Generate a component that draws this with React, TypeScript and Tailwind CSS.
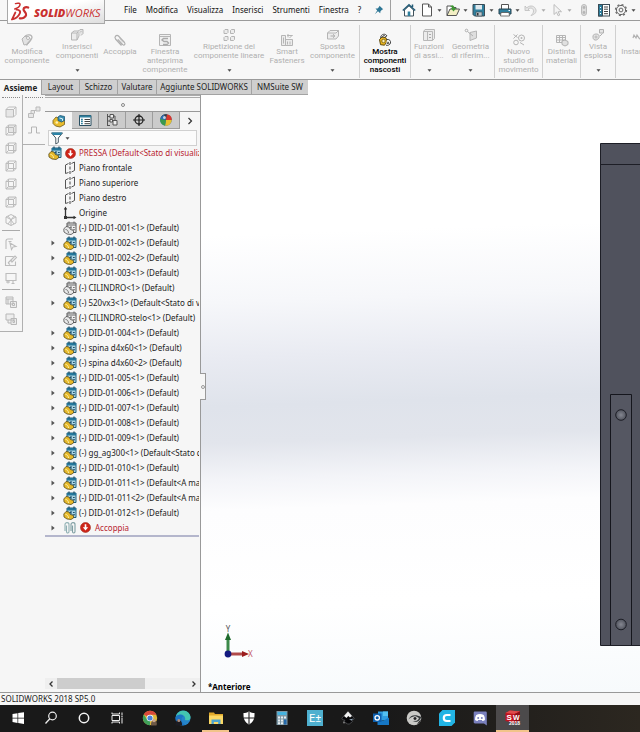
import type { ReactNode } from 'react'
import clsx from 'clsx'

interface IconProps {
  size?: number
  box?: number
  children: ReactNode
}

function Icon({ size = 14, box = 14, children }: IconProps) {
  return (
    <svg width={size} height={size} viewBox={`0 0 ${box} ${box}`} fill="none" className="shrink-0" aria-hidden="true">
      {children}
    </svg>
  )
}

function Caret({ muted = false }: { muted?: boolean }) {
  return (
    <svg width="5" height="3" viewBox="0 0 5 3" className="shrink-0" aria-hidden="true">
      <path d="M0.5 0.3h4L2.5 2.8z" fill={muted ? '#aaa' : '#4a4a4a'} />
    </svg>
  )
}

/* ---------- logo ---------- */

function Logo() {
  return (
    <div className="absolute left-[7px] top-0 z-10 flex h-6 w-[98px] items-center gap-1 border border-t-0 border-[#a9a9a9] bg-linear-to-br from-white from-40% to-[#dedede] pl-[3px]">
      <svg width="19" height="20" viewBox="0 0 19 20" fill="none" stroke="#c9302f" strokeLinecap="round" aria-hidden="true">
        <path d="M4.5 1.600C7 .9 9.400 1.200 9 2.800 8.600 4.600 6 6.200 3.800 7" strokeWidth="1.500" />
        <path d="M5.600 7.600C8.600 7.800 9.800 9.300 8.700 11.600 7.300 14.600 4 16.900 1.200 17.200L4.300 10.600" strokeWidth="1.900" />
        <path d="M17.200 5.600C15.400 4.700 12.600 5.400 12.500 7.300 12.400 9.300 15.600 10.600 15.100 13 14.600 15.500 11.400 16.700 8.800 16.300" strokeWidth="2.200" />
      </svg>
      <span className="pt-[3px] font-['Open_Sans','Noto_Sans',sans-serif] text-[11px] leading-3 text-[#c9302f] italic">
        <b className="font-extrabold">SOLID</b>WORKS
      </span>
    </div>
  )
}

/* ---------- title bar ---------- */

const MENU = ['File', 'Modifica', 'Visualizza', 'Inserisci', 'Strumenti', 'Finestra', '?']

const QUICK_TOOLS: { name: string; icon: ReactNode; muted?: boolean }[] = [
  {
    name: 'Nuovo',
    icon: <path d="M2.500 1h6l3 3v9h-9zM8.500 1v3h3" fill="#fff" stroke="#555" />,
  },
  {
    name: 'Apri',
    icon: (
      <>
        <path d="M1 12.500V3h4l1 1.500h4V6" fill="#fff" stroke="#555" />
        <path d="M1 12.500 4 6h9.500l-3 6.500z" fill="#f3efc4" stroke="#555" />
        <path d="M4 3.500c2-2 4-1.500 4.500 1.500h1.800L7.500 8.500 4.800 5h1.700C6.300 4 5.500 3.500 4 3.500z" fill="#3f9a34" />
      </>
    ),
  },
  {
    name: 'Salva',
    icon: (
      <>
        <path d="M1 1.500h11.500V13H2.500L1 11.500z" fill="#2f7f9d" stroke="#3a4b55" />
        <path d="M3.500 2h6.500v4.500H3.500z" fill="#dfe9ee" />
        <path d="M4 9h6v4H4z" fill="#bcc5cb" stroke="#3a4b55" strokeWidth=".6" />
        <path d="M5 10h1.500v2.500H5z" fill="#333" />
      </>
    ),
  },
  {
    name: 'Stampa',
    icon: (
      <>
        <path d="M3.500 6V1.500h7V6" fill="#fff" stroke="#555" />
        <path d="M1 6h12v5H1z" fill="#2f7f9d" stroke="#2b4451" />
        <path d="M3 9.500h8l.5 3.500h-9z" fill="#fff" stroke="#555" strokeWidth=".8" />
        <path d="M10.500 7.500h1.500" stroke="#fff" />
      </>
    ),
  },
  {
    name: 'Annulla',
    muted: true,
    icon: <path d="M1 3v4.500h4.500L4 6c3-2 5.500-.5 5.500 2 0 2-1 3-2.500 4.500C11 11.500 12.500 9 12 7 11 3 6.500 1.500 2.800 4.800z" fill="#e6e6e6" stroke="#c2c2c2" strokeWidth=".9" />,
  },
  {
    name: 'Seleziona',
    muted: true,
    icon: <path d="M4 1.500v10l2.500-2.300 1.700 3.600 1.500-.7L8.200 8.700h3.300z" fill="#f4f4f4" stroke="#bdbdbd" />,
  },
]

function TitleBar() {
  return (
    <header className="relative flex h-[21px] items-center border-b border-[#9a9a9a] bg-[#f7f7f7] pl-[124px]">
      <Logo />
      <nav className="flex items-center gap-[9px]">
        {MENU.map(item => (
          <button key={item} className="leading-3 text-[#111]">{item}</button>
        ))}
      </nav>
      <div className="ml-auto flex items-center">
        <button aria-label="Blocca menu" className="pr-1.5">
          <Icon size={10} box={10}>
            <path d="M5.500.8 9.200 4.300 8 4.700 6.500 6.300 6.200 8.300 4 6.300.8 9.200 3.200 5.500 1.500 3.600l2-.2L5 2z" fill="#2e7796" />
          </Icon>
        </button>
        <div className="flex h-5 items-center border-l border-[#a0a0a0] pl-2">
          <button aria-label="Home" className="flex w-[19px] justify-center">
            <Icon>
              <path d="M2.500 7v6h9V7L7 2.800z" fill="#fff" stroke="#41525c" />
              <path d="M5.700 13V8.500h2.600V13z" fill="#2f7f9d" />
              <path d="M.8 7.500 7 1.700l6.200 5.800M10.500 1.500V4" stroke="#245c77" strokeWidth="1.500" />
            </Icon>
          </button>
          {QUICK_TOOLS.map(tool => (
            <button key={tool.name} aria-label={tool.name} className="flex w-[26px] items-center gap-[3px] pl-[2px]">
              <Icon>{tool.icon}</Icon>
              <Caret muted={tool.muted} />
            </button>
          ))}
          <button aria-label="Ricostruisci" className="flex w-5 justify-center">
            <Icon>
              <rect x="4.500" y="1.500" width="5" height="11" rx="2.500" fill="#ddd" stroke="#bbb" />
              <circle cx="7" cy="4.500" r="1.400" fill="#b5b5b5" />
              <circle cx="7" cy="9.500" r="1.400" fill="#b5b5b5" />
            </Icon>
          </button>
          <button aria-label="Proprietà" className="flex w-5 justify-center">
            <Icon>
              <rect x="1.500" y="1.500" width="11" height="11.500" fill="#fff" stroke="#3a4b55" />
              <path d="M1.500 1.500h4v11.500h-4z" fill="#2f7f9d" stroke="#3a4b55" />
              <path d="M7 4h4M7 6.200h4M7 8.500h4M7 10.700h4" stroke="#444" />
              <path d="M3 4.500h1M3 7.500h1M3 10.500h1" stroke="#fff" />
            </Icon>
          </button>
          <button aria-label="Opzioni" className="flex items-center gap-[3px] pr-1">
            <Icon>
              <circle cx="7" cy="7" r="4.600" fill="#f4f4f4" stroke="#666" />
              <circle cx="7" cy="7" r="5.500" stroke="#666" strokeWidth="1.300" strokeDasharray="2 2.300" />
              <circle cx="7" cy="7" r="1.900" stroke="#666" />
            </Icon>
            <Caret />
          </button>
        </div>
      </div>
    </header>
  )
}

/* ---------- ribbon ---------- */

interface Command {
  lines: string[]
  width: string
  icon: ReactNode
  active?: boolean
  menu?: boolean
  divider?: boolean
}

const COMMANDS: Command[] = [
  {
    lines: ['Modifica', 'componente'],
    width: 'w-[54px]',
    icon: (
      <>
        <path d="M2 6 5 3l4 1 2 3-3 4-4 1z" fill="#e2e2e2" stroke="#b5b5b5" />
        <path d="M5 3.500c2-2.500 7-2 7 1S8 8 6.500 12.500" stroke="#b5b5b5" strokeWidth="1.300" />
        <circle cx="8" cy="5" r="1.500" fill="#fff" stroke="#b5b5b5" />
      </>
    ),
  },
  {
    lines: ['Inserisci', 'componenti'],
    width: 'w-[46px]',
    menu: true,
    icon: (
      <>
        <path d="M1.500 5 4 3h5v5l-2 4H1.500zM1.500 5H7l2-2M7 5v7" fill="#ececec" stroke="#b5b5b5" />
        <path d="M8 3.500 10 1.500h3v4L11 7.500M10 4.500l1.500-1.500" fill="#e4e4e4" stroke="#b5b5b5" />
      </>
    ),
  },
  {
    lines: ['Accoppia'],
    width: 'w-[40px]',
    icon: (
      <>
        <path d="M8.500 12.500 2.500 6C1 4 3.500 1 5.500 3l6 6.500c1.500 2-.8 3.500-2 2L4.800 6.300" stroke="#b0b0b0" strokeWidth="1.200" />
        <path d="m6.500 5.500 3.500 4" stroke="#c8c8c8" />
      </>
    ),
  },
  {
    lines: ['Finestra', 'anteprima', 'componente'],
    width: 'w-[50px]',
    icon: (
      <>
        <path d="M1.500 1.500h11v11h-11zM1.500 3.500h11" fill="#f0f0f0" stroke="#b5b5b5" />
        <path d="M10 5.500H5.500L4 7l2 1.500h3L10.500 10 9 11.500H5" stroke="#aaa" strokeWidth="1.400" />
      </>
    ),
  },
  {
    lines: ['Ripetizione del', 'componente lineare'],
    width: 'w-[78px]',
    menu: true,
    icon: (
      <path d="M2 2.500 3 1.500h3v3L5 5.500H2zM8.500 2.500l1-1h3v3l-1 1h-3zM2 9.500l1-1h3v3l-1 1H2zM8.500 9.500l1-1h3v3l-1 1h-3z" fill="#ececec" stroke="#b5b5b5" />
    ),
  },
  {
    lines: ['Smart', 'Fasteners'],
    width: 'w-[38px]',
    icon: (
      <>
        <path d="M1.500 2.500h4v10h-4zM5.500 6.500h7v6h-7z" fill="#ececec" stroke="#b5b5b5" />
        <path d="M7 2.500h5.500M8 1v3.500M9.500 5 12.500 2M3.500 4.500v6M7.500 8.500v3M10 8.500v3" stroke="#b5b5b5" />
      </>
    ),
  },
  {
    lines: ['Sposta', 'componente'],
    width: 'w-[53px]',
    menu: true,
    icon: (
      <>
        <path d="M1.500 5 4 2.500h8.500V8L10 11H1.500zM1.500 5H10l2.500-2.500" fill="#ececec" stroke="#b5b5b5" />
        <path d="M4.500 8h4M7 6.300 8.800 8 7 9.700" stroke="#aaa" />
      </>
    ),
  },
  {
    lines: ['Mostra', 'componenti', 'nascosti'],
    width: 'w-[51px]',
    active: true,
    divider: true,
    icon: (
      <>
        <path d="M1.500 6.500 4 4l4 .8 1 3.700-2.500 3.700-4-.5z" fill="#e9b41d" stroke="#5e4a12" />
        <path d="M2.500 4.500C3 1 7.500 0 9 3l-1.500.5C6.500 2 5 2.300 4.500 4zM9 6.500c2.500-.5 4 1.500 3.500 3.500s-3 2.800-4.500 2.200" fill="#f4f4f4" stroke="#333" strokeWidth=".9" />
        <circle cx="5.500" cy="8" r="1.700" fill="#fff3b8" stroke="#5e4a12" strokeWidth=".7" />
        <path d="m8.500 11 1.500-2.500 1.500 2z" fill="#333" />
      </>
    ),
  },
  {
    lines: ['Funzioni', 'di assi...'],
    width: 'w-[37px]',
    menu: true,
    divider: true,
    icon: (
      <>
        <path d="M1.500 3.500 3 1.500h9.500v9l-2 2h-9zM1.500 3.500h9v9M5.500 3.500v9" fill="#ececec" stroke="#b8b8b8" />
        <path d="M7 6.500h2M7 9.500h2" stroke="#aaa" />
      </>
    ),
  },
  {
    lines: ['Geometria', 'di riferim...'],
    width: 'w-[47px]',
    menu: true,
    icon: (
      <>
        <path d="m6 4.500 6.500-1.500v7L6 12.500z" fill="#dedede" stroke="#b5b5b5" />
        <circle cx="2.500" cy="2.500" r="1.300" stroke="#b0b0b0" />
        <path d="M3.500 3.500 9 8" stroke="#b0b0b0" />
      </>
    ),
  },
  {
    lines: ['Nuovo', 'studio di', 'movimento'],
    width: 'w-[48px]',
    divider: true,
    icon: (
      <>
        <circle cx="9.500" cy="5" r="3" stroke="#b5b5b5" />
        <circle cx="9.500" cy="5" r="1" fill="#b5b5b5" />
        <circle cx="4" cy="9.500" r="2.300" stroke="#b5b5b5" />
        <path d="m1.500 1.500 4 3M5.500 1.500l-4 4M8 9.500l4 2.500" stroke="#b5b5b5" />
      </>
    ),
  },
  {
    lines: ['Distinta', 'materiali'],
    width: 'w-[38px]',
    divider: true,
    icon: (
      <>
        <path d="M1.500 2.500h9v7h-9zM1.500 4.500h9M1.500 7h9M4.500 2.500v7M7.500 2.500v7" stroke="#b5b5b5" />
        <path d="m7 8 3-1 3 1.500v3L10 13l-3-1.500z" fill="#e0e0e0" stroke="#b0b0b0" />
      </>
    ),
  },
  {
    lines: ['Vista', 'esplosa'],
    width: 'w-[35px]',
    menu: true,
    divider: true,
    icon: (
      <>
        <path d="M2 8c0-2 5-3 6-.5s-2 5-4 4.500S2 10 2 8z" fill="#e4e4e4" stroke="#b0b0b0" />
        <circle cx="5" cy="9" r="1" fill="#fff" stroke="#b0b0b0" />
        <path d="M8.500 1.500h4v3.500h-4zM9 8l2.500-2.500" fill="#e4e4e4" stroke="#b0b0b0" />
      </>
    ),
  },
  {
    lines: ['Instant3D'],
    width: 'w-[46px]',
    divider: true,
    icon: <path d="m1 5 1-3 2 3 1-3 2 3 5 5M9 11l4 2-1.500-4" stroke="#b0b0b0" strokeWidth="1.200" />,
  },
]

function Ribbon() {
  return (
    <div className="flex h-[59px] overflow-hidden border-b border-[#9a9a9a] bg-[#f7f7f7] pt-1 pb-px font-[Roboto,'Noto_Sans',sans-serif]">
      {COMMANDS.map(cmd => (
        <button
          key={cmd.lines.join(' ')}
          className={clsx(
            'flex shrink-0 flex-col items-center whitespace-nowrap leading-[9px]',
            cmd.width,
            cmd.divider && 'border-l border-[#d0d0d0]',
            cmd.active ? 'font-medium text-black' : 'text-[#b0b0b0]',
            cmd.menu ? 'pt-[3px]' : 'pt-2',
          )}
        >
          <Icon>{cmd.icon}</Icon>
          {cmd.lines.map(line => (
            <span key={line}>{line}</span>
          ))}
          {cmd.menu && (
            <span className="mt-auto pb-1.5">
              <Caret />
            </span>
          )}
        </button>
      ))}
    </div>
  )
}

const TABS = [
  { name: 'Assieme', width: 'w-[41px]' },
  { name: 'Layout', width: 'w-[38px]' },
  { name: 'Schizzo', width: 'w-[38px]' },
  { name: 'Valutare', width: 'w-[39px]' },
  { name: 'Aggiunte SOLIDWORKS', width: 'w-[95px]' },
  { name: 'NMSuite SW', width: 'w-[57px]' },
]

function RibbonTabs() {
  return (
    <div role="tablist" className="flex h-[15px] bg-white">
      {TABS.map((tab, i) => (
        <button
          key={tab.name}
          role="tab"
          aria-selected={i === 0}
          className={clsx(
            'flex shrink-0 items-center justify-center whitespace-nowrap leading-3 text-[#222]',
            tab.width,
            i === 0 ? 'bg-[#f7f7f7] font-bold' : 'border-b border-l border-[#a3a3a3] bg-[#cfcfcf]',
          )}
        >
          {tab.name}
        </button>
      ))}
    </div>
  )
}

/* ---------- left tool strips ---------- */

const CUBE = 'M2 4.500h7.500V12H2zM4.500 2H12v7.500M2 4.500 4.500 2M9.500 4.500 12 2M9.500 12 12 9.500'
const CUBE_BACK = 'M4.500 2v7.500H12M2 12l2.500-2.500'

const VIEW_CUBES = [
  { name: 'Frontale', path: CUBE, face: 'M2 4.500h7.500V12H2z' },
  { name: 'Posteriore', path: CUBE + CUBE_BACK, face: 'M4.500 2H12v7.500H4.500z' },
  { name: 'Sinistra', path: CUBE + CUBE_BACK, face: 'M9.500 4.500 12 2v7.500L9.500 12z' },
  { name: 'Destra', path: CUBE + CUBE_BACK, face: 'M2 4.500 4.500 2v7.500L2 12z' },
  { name: 'Superiore', path: CUBE + CUBE_BACK, face: 'M2 12l2.500-2.500H12L9.500 12z' },
  { name: 'Inferiore', path: CUBE + CUBE_BACK, face: 'M2 4.500 4.500 2H12L9.500 4.500z' },
  { name: 'Isometrica', path: 'M7 1.500 12 4v6l-5 2.500L2 10V4zM2 4l5 2.500L12 4M7 6.500v6M4 3l6 8M10 3 4 11', face: '' },
]

const SKETCH_TOOLS = [
  { name: 'Schizzo', path: 'M2 12V4c0-1.500 1-2 2-2h5M4.500 4.500h3M6 6l6 3.500-3 .5-1.500 2.500z' },
  { name: 'Modifica schizzo', path: 'M1.500 2.500h8M1.500 2.500v9h10v-4M4 9l3-3M7 6l4-4 1.500 1.500L8 8zM4 9l2 1.500' },
  { name: 'Blocco', path: 'M2 2.500h10v7H2zM4 9.500v3M2 11h4M9 9.500v3M7.500 12.500h3' },
]

const COPY_TOOLS = [
  { name: 'Copia', path: 'M2 2h7v7H2zM2 4h7M4 4v5M6.500 6.500h6v6h-6zM8.500 8.500h2v2h-2z' },
  { name: 'Incolla', path: 'M2 2h8v6H2zM4 8v3h3M7 6.500h5.500v6H7zM9 8.500h1.500v2H9z' },
]

function ToolStrips() {
  return (
    <div className="flex shrink-0 items-start bg-[#f6f6f6]">
      <div className="flex h-[237px] w-[23px] flex-col items-center border-r border-b border-[#b0b0b0] pt-[2px]">
        <div className="mb-[5px] w-[18px] border-t border-dotted border-[#888]" />
        {VIEW_CUBES.map(cube => (
          <button key={cube.name} aria-label={cube.name} className="flex h-[18px] items-center">
            <Icon>
              {cube.face && <path d={cube.face} fill="#e6e6e6" />}
              <path d={cube.path} stroke="#bcbcbc" />
            </Icon>
          </button>
        ))}
        <div className="mt-px mb-1 w-[18px] border-t border-[#aaa]" />
        {SKETCH_TOOLS.map(tool => (
          <button key={tool.name} aria-label={tool.name} className="flex h-[17px] items-center">
            <Icon><path d={tool.path} stroke="#bcbcbc" strokeWidth="1.100" /></Icon>
          </button>
        ))}
        <div className="my-[3px] w-[18px] border-t border-[#aaa]" />
        {COPY_TOOLS.map(tool => (
          <button key={tool.name} aria-label={tool.name} className="flex h-[17px] items-center">
            <Icon><path d={tool.path} fill="#ededed" stroke="#b8b8b8" /></Icon>
          </button>
        ))}
      </div>
      <div className="flex h-[50px] w-[22px] flex-col items-center border-b border-[#b0b0b0] pt-[2px]">
        <div className="mb-[5px] w-[18px] border-t border-dotted border-[#888]" />
        <button aria-label="Percorso" className="flex h-[18px] items-center">
          <Icon>
            <path d="M1.500 8.500h5v4h-5zM4 8.500V5.500h3.500v3M7 5.500h2M9 2h4v4H9z" fill="#e6e6e6" stroke="#bababa" />
          </Icon>
        </button>
        <button aria-label="Profilo" className="flex h-[18px] items-center">
          <Icon><path d="M1 10h3.500V4h5v6H13" stroke="#b5b5b5" /></Icon>
        </button>
      </div>
    </div>
  )
}

/* ---------- feature tree ---------- */

function AssemblyIcon() {
  return (
    <Icon>
      <path d="M4 2h9v9.500H4z" fill="#a9d3e2" stroke="#1f5f7c" />
      <path d="M4 2h9v2.500H4z" fill="#24779b" />
      <path d="M6 .500v2M11 .500v2" stroke="#1d4f69" strokeWidth="1.300" />
      <path d="M.8 8 3 5.500 6 6l1.500 2.500 3 1v2.500l-2.500 1.500-4-.5L1 11z" fill="#e6b92a" stroke="#5c4f1e" strokeWidth=".8" />
      <path d="M6.500 6.500h2M10 6.500h1.700M9.500 8.700h2.500M8 5v3.500" stroke="#1d4f69" strokeWidth="1.100" />
      <path d="M2.500 8.500c1.800 0 2.800 1.300 3 3.500" stroke="#fff0a8" />
    </Icon>
  )
}

function HiddenPartIcon() {
  return (
    <Icon>
      <path d="M4 2h9v9.500H4z" fill="#eee" stroke="#5a5a5a" />
      <path d="M4 4h9M6 .500v2M11 .500v2" stroke="#666" />
      <path d="M.8 8 3 5.500 6 6l1.500 2.500 3 1v2.500l-2.500 1.500-4-.5L1 11z" fill="#e9e9e9" stroke="#4d4d4d" strokeWidth=".8" />
      <path d="M6.500 6.500h2M10 6.500h1.700M9.500 8.700h2.500M8 5v3.500M2.500 8.500c1.800 0 2.800 1.300 3 3.500" stroke="#777" />
    </Icon>
  )
}

function PlaneIcon() {
  return (
    <Icon>
      <path d="M5.500 2.500 2.500 4v8.500l3-1M8.500 2.500l3-1.500v8.500l-3 1.500" stroke="#555" />
      <path d="M7 1v12.500" stroke="#444" strokeDasharray="3 1.500" />
    </Icon>
  )
}

function OriginIcon() {
  return (
    <Icon>
      <path d="M2.500 2v9.500H12" stroke="#333" strokeWidth="1.300" />
      <path d="M2.500 .5 4.200 3.500H.8zM13.500 11.500l-3-1.700v3.400zM1 10h3v3H1z" fill="#333" />
    </Icon>
  )
}

function MatesIcon() {
  return (
    <Icon>
      <path d="M2 10V3.500c0-2.500 4-2.500 4 0v7c0 2-2.500 2-2.500 0V4.500" stroke="#8fb0b3" strokeWidth="1.100" />
      <path d="M8 10V3.500c0-2.500 4-2.500 4 0v7c0 2-2.500 2-2.500 0V4.500" stroke="#7e9ea2" strokeWidth="1.100" />
    </Icon>
  )
}

function ErrorIcon() {
  return (
    <Icon size={11} box={11}>
      <circle cx="5.500" cy="5.500" r="5" fill="#cf2418" stroke="#9d2b1c" strokeWidth=".6" />
      <path d="M4.700 2.300h1.600v3h1.900L5.500 8.600 2.800 5.300h1.900z" fill="#fff" />
    </Icon>
  )
}

type Kind = 'plane' | 'origin' | 'hidden' | 'assembly'

const NODES: { label: string; kind: Kind }[] = [
  { label: 'Piano frontale', kind: 'plane' },
  { label: 'Piano superiore', kind: 'plane' },
  { label: 'Piano destro', kind: 'plane' },
  { label: 'Origine', kind: 'origin' },
  { label: '(-) DID-01-001<1> (Default)', kind: 'hidden' },
  { label: '(-) DID-01-002<1> (Default)', kind: 'assembly' },
  { label: '(-) DID-01-002<2> (Default)', kind: 'assembly' },
  { label: '(-) DID-01-003<1> (Default)', kind: 'assembly' },
  { label: '(-) CILINDRO<1> (Default)', kind: 'hidden' },
  { label: '(-) 520vx3<1> (Default<Stato di v', kind: 'assembly' },
  { label: '(-) CILINDRO-stelo<1> (Default)', kind: 'hidden' },
  { label: '(-) DID-01-004<1> (Default)', kind: 'assembly' },
  { label: '(-) spina d4x60<1> (Default)', kind: 'assembly' },
  { label: '(-) spina d4x60<2> (Default)', kind: 'assembly' },
  { label: '(-) DID-01-005<1> (Default)', kind: 'assembly' },
  { label: '(-) DID-01-006<1> (Default)', kind: 'assembly' },
  { label: '(-) DID-01-007<1> (Default)', kind: 'assembly' },
  { label: '(-) DID-01-008<1> (Default)', kind: 'assembly' },
  { label: '(-) DID-01-009<1> (Default)', kind: 'assembly' },
  { label: '(-) gg_ag300<1> (Default<Stato d', kind: 'assembly' },
  { label: '(-) DID-01-010<1> (Default)', kind: 'assembly' },
  { label: '(-) DID-01-011<1> (Default<A ma', kind: 'assembly' },
  { label: '(-) DID-01-011<2> (Default<A ma', kind: 'assembly' },
  { label: '(-) DID-01-012<1> (Default)', kind: 'assembly' },
]

const NODE_ICONS: Record<Kind, ReactNode> = {
  plane: <PlaneIcon />,
  origin: <OriginIcon />,
  hidden: <HiddenPartIcon />,
  assembly: <AssemblyIcon />,
}

function Expander() {
  return (
    <svg width="4" height="6" viewBox="0 0 4 6" aria-hidden="true">
      <path d="M.5.500 3.700 3 .5 5.500z" fill="#555" />
    </svg>
  )
}

const PANEL_TABS: { name: string; icon: ReactNode }[] = [
  {
    name: 'Albero di disegno',
    icon: (
      <>
        <path d="M1 6.500 4 3l4 1.500 1 2 3.500-.5v4.500L8 13l-4.500-1L1 9.500z" fill="#e8bb2c" stroke="#6d5a1c" strokeWidth=".8" />
        <path d="M6 3 8 1.500l4.500 1v4L9.500 8 6 6.500z" fill="#3a8fb0" stroke="#1d5876" strokeWidth=".8" />
        <path d="m7.500 4 3 .8v2" stroke="#e5f3f8" />
        <circle cx="4.800" cy="8.500" r="1.300" fill="#fff1b0" />
      </>
    ),
  },
  {
    name: 'PropertyManager',
    icon: (
      <>
        <path d="M1.500 2.500h11.500v10H1.500z" fill="#fff" stroke="#2b4f61" />
        <path d="M1.500 2.500h11.500v2H1.500z" fill="#2f7f9d" />
        <path d="M6.500 6.500H12M6.500 8.500H12M6.500 10.700H12" stroke="#444" />
        <path d="M3 6.500h1.800M3 8.500h1.800M3 10.700h1.800" stroke="#2f7f9d" strokeWidth="1.300" />
      </>
    ),
  },
  {
    name: 'ConfigurationManager',
    icon: (
      <>
        <path d="M2.500 1v12M2.500 3.500h2.500M2.500 8h2.500M2.500 12.500H5" stroke="#555" />
        <path d="M5 1.500h3.500V5H5zM5 6.500h2.500V9H5zM8 7.500h4v4.500H8zM10 3v4.500M8.500 3H10" fill="#eee" stroke="#555" />
      </>
    ),
  },
  {
    name: 'DimXpertManager',
    icon: (
      <>
        <circle cx="7" cy="7" r="4" stroke="#222" strokeWidth="1.300" />
        <path d="M7 1v12M1 7h12" stroke="#222" strokeWidth="1.200" />
      </>
    ),
  },
  {
    name: 'DisplayManager',
    icon: (
      <>
        <circle cx="7" cy="7" r="5.800" fill="#2d6fb3" />
        <path d="M7 7 1.500 5A5.800 5.800 0 0 1 8 1.300z" fill="#3a3a3a" />
        <path d="M7 7 8 1.300A5.800 5.800 0 0 1 12.800 7z" fill="#d9372c" />
        <path d="M7 7h5.800A5.800 5.800 0 0 1 6 12.700z" fill="#e9c02f" />
        <path d="M7 7 6 12.700A5.800 5.800 0 0 1 1.500 5z" fill="#3c9a4c" />
        <path d="M7 7 1.300 6A5.800 5.800 0 0 1 5 1.600z" fill="#2d6fb3" />
        <circle cx="5.500" cy="4.500" r="1.500" fill="#fff" opacity=".7" />
      </>
    ),
  },
]

function FeaturePanel() {
  return (
    <aside className="relative flex w-[156px] shrink-0 flex-col border-r border-[#999] bg-[#f6f6f6]">
      <div className="h-[3px] border-y border-[#aaa]" />
      <div className="flex h-[13px] items-center justify-center">
        <span className="size-1 rounded-full border border-[#888]" />
      </div>
      <div role="tablist" className="flex h-[18px] border-t border-[#999]">
        {PANEL_TABS.map((tab, i) => (
          <button
            key={tab.name}
            role="tab"
            aria-label={tab.name}
            aria-selected={i === 0}
            className={clsx(
              'flex w-[27px] items-center justify-center',
              i > 0 && 'border-r border-b border-[#9d9d9d] bg-[#cbcbcb]',
            )}
          >
            <Icon>{tab.icon}</Icon>
          </button>
        ))}
        <button aria-label="Altre schede" className="flex flex-1 items-center justify-center">
          <Icon size={8} box={8}><path d="m2.500 1 3 3-3 3" stroke="#333" strokeWidth="1.200" /></Icon>
        </button>
      </div>
      <label className="mx-[3px] mt-px flex h-4 items-center gap-px border border-[#d0d0d0] bg-[#fbfbfb] pl-px">
        <Icon>
          <path d="M1.500 2h11L8.300 7v4.500L5.800 13V7z" fill="#fff" stroke="#4a5a63" />
          <path d="M1.500 1.500h11L10.800 4H3.200z" fill="#2c83a6" />
        </Icon>
        <Caret />
        <input type="text" aria-label="Filtro" className="min-w-0 flex-1 bg-transparent outline-none" />
      </label>

      <div className="mr-px overflow-hidden border-b-2 border-[#b4b6cc] leading-[14px] whitespace-nowrap text-[#222]">
        <div className="flex h-[14px] items-center gap-[3px] pl-[3px] text-[#b8232f]">
          <AssemblyIcon />
          <ErrorIcon />
          <span>PRESSA (Default&lt;Stato di visualiz</span>
        </div>
        <ul>
          {NODES.map(node => (
            <li key={node.label} className="flex h-[15px] items-center pl-1.5">
              <span className="w-3 shrink-0">{node.kind === 'assembly' && <Expander />}</span>
              {NODE_ICONS[node.kind]}
              <span className="ml-[2px]">{node.label}</span>
            </li>
          ))}
          <li className="flex h-[15px] items-center pl-1.5 text-[#b8232f]">
            <span className="w-3 shrink-0"><Expander /></span>
            <MatesIcon />
            <span className="mr-1 ml-[3px]"><ErrorIcon /></span>
            Accoppia
          </li>
        </ul>
      </div>

      <div className="mt-auto mb-[3px] flex h-[11px] items-center bg-[#efefef]">
        <button aria-label="Scorri a sinistra" className="flex w-3 justify-center">
          <Icon size={8} box={8}><path d="M5.500 1.500 3 4l2.500 2.500" stroke="#333" strokeWidth="1.300" /></Icon>
        </button>
        <div className="h-full w-[88px] bg-[#cdcdcd]" />
        <button aria-label="Scorri a destra" className="ml-auto flex w-3 justify-center">
          <Icon size={8} box={8}><path d="M2.500 1.500 5 4 2.500 6.500" stroke="#333" strokeWidth="1.300" /></Icon>
        </button>
      </div>

      <button aria-label="Comprimi pannello" className="absolute top-[278px] -right-1.5 z-10 flex h-[27px] w-1.5 items-center justify-center border border-l-0 border-[#999] bg-[#f6f6f6]">
        <span className="size-1 shrink-0 rounded-full border border-[#999]" />
      </button>
    </aside>
  )
}

/* ---------- graphics area ---------- */

function Model() {
  return (
    <svg width="40" height="503" viewBox="0 0 40 503" className="absolute top-12 right-0" role="img" aria-label="Pressa">
      <defs>
        <radialGradient id="screw">
          <stop offset="0" stopColor="#858791" />
          <stop offset="1" stopColor="#50535d" />
        </radialGradient>
      </defs>
      <path d="M.5.500H41V502.500H.5z" fill="#50525d" stroke="#1d1e26" />
      <path d="M0 21.500h40" stroke="#1d1e26" />
      <path d="M10.500 502V251.500h21V502" fill="#555762" stroke="#15161d" />
      <circle cx="21" cy="272" r="5.300" fill="url(#screw)" stroke="#1d1e26" />
      <circle cx="21" cy="481.500" r="5.300" fill="url(#screw)" stroke="#1d1e26" />
    </svg>
  )
}

function Viewport() {
  return (
    <main className="relative flex min-w-0 flex-1 flex-col justify-end overflow-hidden bg-linear-[178deg,#ffffff_0%,#ffffff_23%,#f6f7fa_34%,#e9ebf2_43%,#dfe3eb_51%,#e2e5ec_57%,#f3f4f8_63%,#fdfdfe_68%,#ffffff_84%,#f7fafc_100%]">
      <Model />
      <div className="flex flex-col items-start pl-[7px]">
        <svg width="50" height="42" viewBox="0 0 50 42" className="ml-3" role="img" aria-label="Assi">
          <path d="M8 33V17" stroke="#3c8a4a" strokeWidth="3" />
          <path d="M8 11.500 11 19H5z" fill="#1f6b2d" />
          <path d="M8 33h15" stroke="#b04a4a" strokeWidth="3" />
          <path d="M29 33l-7-3v6z" fill="#9c1d1d" />
          <circle cx="8" cy="33" r="3.400" fill="#141a80" />
          <text x="8" y="11" textAnchor="middle" fontSize="8" fill="#555">Y</text>
          <text x="28" y="36" fontSize="8" fill="#c55a6a">X</text>
        </svg>
        <span className="mt-[19px] leading-[10px] font-bold text-black">*Anteriore</span>
      </div>
    </main>
  )
}

/* ---------- taskbar ---------- */

const TASKS: { name: string; icon: ReactNode; state?: 'open' | 'focused' }[] = [
  {
    name: 'Start',
    icon: <path d="M2.500 4 7.500 3.200v4.500h-5zM8.200 3.100l5.800-.9v5.500H8.200zM2.500 8.400h5v4.500l-5-.8zM8.200 8.400H14V14l-5.800-.9z" fill="#fff" />,
  },
  {
    name: 'Cerca',
    icon: (
      <>
        <circle cx="9.500" cy="6" r="3.800" stroke="#eee" strokeWidth="1.200" />
        <path d="M6.800 8.800 2.500 13.500" stroke="#eee" strokeWidth="1.300" />
      </>
    ),
  },
  { name: 'Cortana', icon: <circle cx="8" cy="8" r="4.700" stroke="#f4f4f4" strokeWidth="1.500" /> },
  {
    name: 'Visualizzazione attività',
    icon: <path d="M3 5.500h7.500v5H3zM3 2.500v1.500h7.500V2.500M3 13.500V12h7.500v1.500M13 2.500v3M13 8v5.500M12.200 6.800h1.600" stroke="#eee" />,
  },
  {
    name: 'Chrome',
    icon: (
      <>
        <circle cx="8" cy="8" r="7.200" fill="#ddb93a" />
        <path d="M8 8 1.800 4.400A7.200 7.200 0 0 1 14.500 4.800H8z" fill="#d9483b" />
        <path d="M8 8 8 15.200A7.200 7.200 0 0 1 1.800 4.400L5 9.500z" fill="#3fa05a" />
        <circle cx="8" cy="8" r="3.300" fill="#fff" />
        <circle cx="8" cy="8" r="2.600" fill="#4a83d8" />
        <path d="M9 15.500c-.5-3 .8-5 3-5s3.500 2.500 2.500 5z" fill="#6e5947" />
        <circle cx="12" cy="10.500" r="1.700" fill="#c9a68c" />
      </>
    ),
  },
  {
    name: 'Edge',
    icon: (
      <>
        <circle cx="8" cy="8" r="7.500" fill="#2584c9" />
        <path d="M1 6.500C2.500-1 14-1.500 15.500 6.500c.5 3.500-3 4.500-5.500 3.500 1-3.500-2-6-5-5.500-2 .3-3.500 1.200-4 2z" fill="#43c5b0" />
        <path d="M.6 7C3 4 7 4 8.500 6.500 6 7 5.500 12 10 14.800 3 17 0 12 .6 7z" fill="#1b74c4" />
        <path d="M.5 15.500c-.3-3 .8-5.500 3-5.500s3.800 2 3.500 5.500z" fill="#1c1c22" />
        <circle cx="3.800" cy="10.500" r="1.500" fill="#a98b7c" />
      </>
    ),
  },
  {
    name: 'Esplora file',
    state: 'open',
    icon: (
      <>
        <path d="M1 2.500h5l1 1.500h8V14H1z" fill="#e0a92b" />
        <path d="M1 5.500h14V14H1z" fill="#fbd865" />
        <path d="M3.500 14V9.500h9V14h-2.300v-2H5.800v2z" fill="#4da3cf" />
      </>
    ),
  },
  {
    name: 'Sicurezza',
    icon: (
      <>
        <path d="M8 1.500c2 1.200 3.800 1.500 5.500 1.500C13.700 9 12.500 12 8 14.500 3.500 12 2.300 9 2.500 3 4.200 3 6 2.700 8 1.500z" fill="#fff" />
        <path d="M8 2v12M2.500 8h11" stroke="#222" strokeWidth="1.100" />
      </>
    ),
  },
  {
    name: 'Calcolatrice',
    icon: (
      <>
        <path d="M2.500 1h11v14h-11z" fill="#7d98a6" />
        <path d="M3.500 2h9v3h-9z" fill="#45b3df" />
        <path d="M4 6.500h2v2H4zM7 6.500h2v2H7zM10 6.500h2v2h-2zM4 9.500h2v2H4zM7 9.500h2v2H7zM4 12.300h2v2H4zM7 12.300h2v2H7z" fill="#e8eef2" />
        <path d="M10 9.500h2.500v5H10z" fill="#2467a8" />
      </>
    ),
  },
  {
    name: 'Energia',
    icon: (
      <>
        <path d="M0 0h16v16H0z" fill="#4fb0cf" />
        <text x="8" y="12" textAnchor="middle" fontSize="11" fill="#fff" fontFamily="Roboto">E±</text>
      </>
    ),
  },
  {
    name: 'Inkscape',
    icon: (
      <>
        <path d="M8 1.500 14 8c.8 1.200-1 2-2.500 2.300l1 1c-1 1.700-2 1.500-3.200 2.700h-2c0-1-2.500-1-3.300-2.500l1-1.200C3.500 10 1.200 9.300 2 8z" fill="#060608" stroke="#77787c" strokeWidth=".5" />
        <path d="M8 1.500 12 6 10 7.500 8.300 6 6.500 8 4 6z" fill="#f2f2f2" />
        <path d="m9 9.500 4.500-1-2 2z" fill="#8ea3b5" />
        <circle cx="4" cy="12.500" r=".9" fill="#888" />
      </>
    ),
  },
  {
    name: 'Outlook',
    icon: (
      <>
        <path d="M5 1.500h10v9H5z" fill="#2f9de0" />
        <path d="M10 1.500h5V6h-5z" fill="#53c0f0" />
        <path d="M4.500 8 10 11l6-3.500V15H4.500z" fill="#1677c5" />
        <path d="M0 3.500h8.500V12H0z" fill="#0d5fae" />
        <circle cx="4.200" cy="7.800" r="2.200" stroke="#fff" strokeWidth="1.300" />
      </>
    ),
  },
  {
    name: 'Gimp',
    icon: (
      <>
        <circle cx="8" cy="8" r="7.300" fill="#c9c9c6" />
        <path d="M2.500 9.500C4.500 5 9 4 15.300 7c-1 4-5 6-9 4.500 3.500.3 6-1 6.700-3.500C9 5.500 5.500 6.500 2.500 9.500z" fill="#34383a" />
        <circle cx="9" cy="8.500" r="1.900" fill="#222" stroke="#e5e5e5" strokeWidth=".7" />
        <path d="M11 14.500c2-.5 3.500-2.500 4-5l-2.500 2.500z" fill="#202020" />
      </>
    ),
  },
  {
    name: 'Cura',
    icon: (
      <>
        <path d="M3.500 0H16v12.500L12.500 16H0V3.500z" fill="#22b4e4" />
        <path d="M11.500 5H7.800C5.500 5 4.800 6.200 4.800 8s.7 3 3 3h3.700" stroke="#fff" strokeWidth="2.200" />
      </>
    ),
  },
  {
    name: 'Discord',
    icon: (
      <>
        <path d="M3 1.500h10.500c.8 0 1.300.5 1.300 1.200V15.500L12 13.500H3c-.8 0-1.300-.5-1.300-1.200V2.700c0-.7.500-1.200 1.300-1.200z" fill="#7a80bd" />
        <path d="M4.300 5c2-1.300 5.400-1.300 7.400 0 1 1.500 1.300 3 1.200 5-1 .8-1.800 1-2.500 1l-.5-1H6.100l-.5 1c-.7 0-1.500-.2-2.500-1-.1-2 .2-3.500 1.200-5z" fill="#fff" />
        <circle cx="6.200" cy="8" r="1" fill="#7a80bd" />
        <circle cx="9.800" cy="8" r="1" fill="#7a80bd" />
      </>
    ),
  },
  {
    name: 'SolidWorks 2018',
    state: 'focused',
    icon: (
      <>
        <path d="M.5 3 5 .5l10 1v9.500L9.500 13 .5 11z" fill="#c1121f" />
        <path d="M.5 3 5 .5l10 1L9.500 4z" fill="#e04b4b" />
        <path d="M9.500 4 15 1.500V11l-5.500 2z" fill="#8e0d16" />
        <text x="1.500" y="10" fontSize="8" fontWeight="700" fill="#fff" fontFamily="Liberation Sans">S</text>
        <text x="8" y="9.500" fontSize="7" fontWeight="700" fill="#fff" fontFamily="Liberation Sans">W</text>
        <text x="4" y="15" fontSize="5" fontWeight="700" fill="#fff" fontFamily="Liberation Sans">2018</text>
      </>
    ),
  },
]

function Taskbar() {
  return (
    <footer className="flex h-[27px] bg-[#1e1d1d] bg-linear-to-r from-[#191919] from-60% to-[#2c2720] pl-px">
      {TASKS.map(task => (
        <button
          key={task.name}
          aria-label={task.name}
          className={clsx(
            'flex w-[33px] flex-col items-center justify-between pt-[5px]',
            task.state === 'focused' && 'bg-[#4c4a4b]',
          )}
        >
          <Icon size={16} box={16}>{task.icon}</Icon>
          {task.state && (
            <span className={clsx('h-[2px] bg-[#f2c48a]', task.state === 'focused' ? 'w-full' : 'w-[27px]')} />
          )}
        </button>
      ))}
    </footer>
  )
}

export default function App() {
  return (
    <div className="flex min-h-screen flex-col overflow-hidden bg-[#f6f6f6] font-['Noto_Sans','Open_Sans',sans-serif] text-[8px]">
      <TitleBar />
      <Ribbon />
      <RibbonTabs />
      <div className="flex flex-1">
        <ToolStrips />
        <FeaturePanel />
        <Viewport />
      </div>
      <div className="flex h-[13px] items-center border-t border-[#999] bg-[#f6f6f6] pl-px leading-3 text-[#222]">
        SOLIDWORKS 2018 SP5.0
      </div>
      <Taskbar />
    </div>
  )
}
